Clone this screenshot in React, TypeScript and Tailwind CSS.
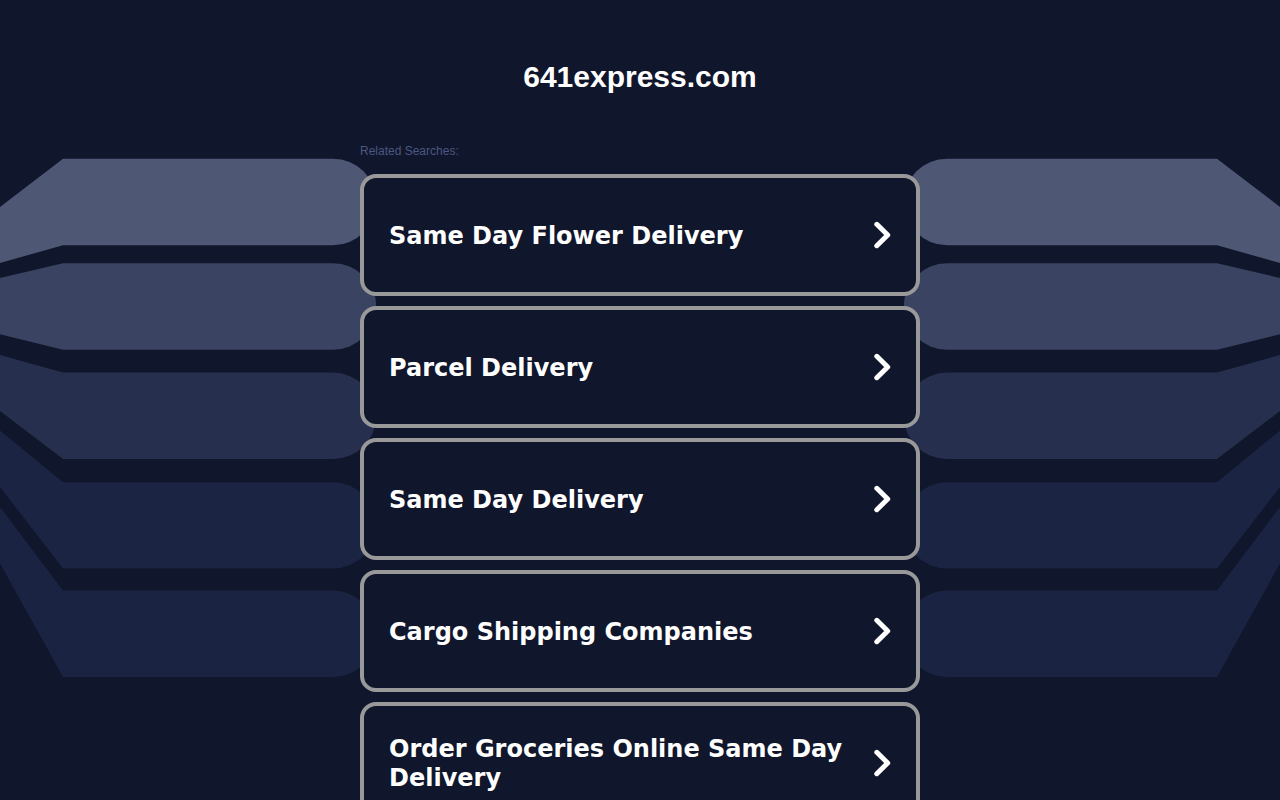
const DOMAIN = '641express.com'

const searches = [
  'Same Day Flower Delivery',
  'Parcel Delivery',
  'Same Day Delivery',
  'Cargo Shipping Companies',
  'Order Groceries Online Same Day Delivery',
]

// top/bottom: edges of the straight part, outerTop/outerBottom: where it leaves the side
const arms = [
  { color: '#4e5773', top: 158.7, bottom: 245.2, outerTop: 207, outerBottom: 263 },
  { color: '#3b4362', top: 263.2, bottom: 349.8, outerTop: 278, outerBottom: 334.3 },
  { color: '#262f4e', top: 372.6, bottom: 459.1, outerTop: 355, outerBottom: 411 },
  { color: '#1b2443', top: 482.2, bottom: 568.6, outerTop: 430.5, outerBottom: 487 },
  { color: '#1a2342', top: 590.6, bottom: 677, outerTop: 507, outerBottom: 563.5 },
]

function Arms() {
  return (
    <g>
      {arms.map((arm) => (
        <path
          key={arm.top}
          fill={arm.color}
          d={`M0 ${arm.outerTop}L63 ${arm.top}H333A43.2 43.2 0 0 1 333 ${arm.bottom}H63L0 ${arm.outerBottom}Z`}
        />
      ))}
    </g>
  )
}

function Backdrop() {
  return (
    <svg
      className="absolute top-0 left-1/2 -translate-x-1/2 max-w-none pointer-events-none"
      width="1280"
      height="800"
      viewBox="0 0 1280 800"
      aria-hidden="true"
    >
      <Arms />
      <g transform="translate(1280 0) scale(-1 1)">
        <Arms />
      </g>
    </svg>
  )
}

function Chevron() {
  return (
    <svg className="shrink-0" width="18" height="28" viewBox="0 0 18 28" fill="none" aria-hidden="true">
      <path d="M2.8 3.3L13.7 14L2.8 24.7" stroke="#fff" strokeWidth="5" strokeLinecap="round" strokeLinejoin="round" />
    </svg>
  )
}

function SearchLink({ label }: { label: string }) {
  return (
    <li>
      <a
        href="#"
        className="flex items-center justify-between gap-4 min-h-[122px] pl-[25px] pr-6 border-4 border-[#999999] rounded-2xl bg-[#10162b] text-white hover:border-white"
      >
        <span className="pt-0.5 font-['DejaVu_Sans',sans-serif] font-bold text-2xl leading-[29px]">{label}</span>
        <Chevron />
      </a>
    </li>
  )
}

export default function App() {
  return (
    <div className="relative min-h-screen overflow-hidden bg-[#10162b] font-['Liberation_Sans',Arial,sans-serif]">
      <Backdrop />
      <header className="relative pt-[59px] text-center">
        <h1 className="text-[30px] leading-9 font-bold text-white">{DOMAIN}</h1>
      </header>
      <main className="relative w-full max-w-[560px] mx-auto mt-[49px]">
        <h2 className="text-xs leading-[14px] text-[#4c5882]">Related Searches:</h2>
        <ul className="flex flex-col gap-2.5 mt-4">
          {searches.map((label) => (
            <SearchLink key={label} label={label} />
          ))}
        </ul>
      </main>
    </div>
  )
}
